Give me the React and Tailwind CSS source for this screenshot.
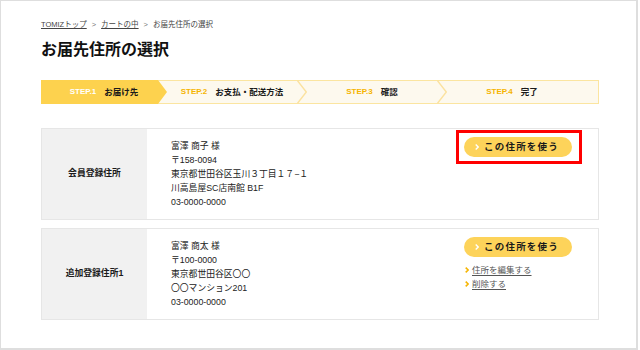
import React from "react";

const FONT = "font-['Liberation_Sans','Noto_Sans_CJK_JP',sans-serif]";

function Chevron({ color = "#ffffff", w = 4, h = 6, sw = 1.4 }) {
  return (
    <svg width={w} height={h} viewBox="0 0 4 6" className="shrink-0">
      <polyline points="0.7,0.6 3.2,3 0.7,5.4" fill="none" stroke={color} strokeWidth={sw} />
    </svg>
  );
}

function StepLabel({ n, label, active }) {
  return (
    <div className="flex items-center justify-center gap-[8px] leading-none">
      <span className={`text-[8px] font-bold ${active ? "text-white" : "text-[#f5b400]"}`}>STEP.{n}</span>
      <span className="text-[8.5px] font-bold text-[#1a1a1a]">{label}</span>
    </div>
  );
}

function StepBar() {
  return (
    <div className="flex h-[24px] w-[558px] items-stretch border border-[#fbe5a0] bg-[#fdf9ee]">
      <div className="-my-px -ml-px flex w-[117px] items-center justify-center bg-[#fdd24e] pl-[9px]">
        <StepLabel n={1} label="お届け先" active />
      </div>
      <svg width="9" height="24" viewBox="0 0 9 24" className="-my-px shrink-0">
        <polygon points="0,0 9,12 0,24" fill="#fdd24e" />
      </svg>
      <div className="flex w-[130px] items-center justify-center">
        <StepLabel n={2} label="お支払・配送方法" />
      </div>
      <svg width="10" height="24" viewBox="0 0 10 24" className="-my-px shrink-0">
        <polyline points="0,0 9.3,12 0,24" fill="none" stroke="#fbe2a0" strokeWidth="1.4" />
      </svg>
      <div className="flex w-[130px] items-center justify-center">
        <StepLabel n={3} label="確認" />
      </div>
      <svg width="10" height="24" viewBox="0 0 10 24" className="-my-px shrink-0">
        <polyline points="0,0 9.3,12 0,24" fill="none" stroke="#fbe2a0" strokeWidth="1.4" />
      </svg>
      <div className="flex w-[130px] items-center justify-center">
        <StepLabel n={4} label="完了" />
      </div>
      <div className="flex-1" />
    </div>
  );
}

function UseButton({ highlight }) {
  return (
    <div className="relative w-fit">
      <button className="flex h-[20px] w-[108px] items-center justify-center gap-[5px] rounded-full bg-[#fdd35a] pr-[2px]">
        <Chevron color="#ffffff" />
        <span className="text-[9.5px] font-bold leading-none tracking-[1.2px] text-[#1a1a1a]">この住所を使う</span>
      </button>
      {highlight && (
        <div className="pointer-events-none absolute -bottom-[7px] -left-[8px] -right-[10px] -top-[7px] border-[3px] border-[#ff0000]" />
      )}
    </div>
  );
}

function AddressCard({ label, lines, highlight, links }) {
  return (
    <div className="flex h-[92px] w-[558px] border border-[#e6e6e6] bg-white">
      <div className="flex w-[105px] shrink-0 items-center justify-center bg-[#f1f1f1]">
        <span className="text-[8.8px] font-bold text-[#1a1a1a]">{label}</span>
      </div>
      <div className="flex flex-1 flex-col justify-center pl-[24px] text-[8.8px] leading-[14px] text-[#222]">
        {lines.map((l, i) => (
          <div key={i}>{l}</div>
        ))}
      </div>
      <div className="flex w-[134px] shrink-0 flex-col pt-[8px]">
        <UseButton highlight={highlight} />
        {links && (
          <div className="mt-[6px] flex flex-col">
            {links.map((t, i) => (
              <a key={i} className="flex h-[14px] items-center gap-[3px] pl-px">
                <Chevron color="#f5b400" w={4} h={6} sw={1.6} />
                <span className="text-[8.5px] leading-none text-[#555] underline underline-offset-[1.5px]">{t}</span>
              </a>
            ))}
          </div>
        )}
      </div>
    </div>
  );
}

export default function App() {
  return (
    <div className={`${FONT} h-[350px] w-[638px] border-b-2 border-l border-r-2 border-t border-[#dedede] bg-white`}>
      <div className="pl-[40px]">
        <div className="mt-[18px] flex h-[12px] items-center text-[7.5px] leading-none text-[#444]">
          <a className="underline underline-offset-[1px]">TOMIZトップ</a>
          <span className="mx-[5px] text-[#777]">&gt;</span>
          <a className="underline underline-offset-[1px]">カートの中</a>
          <span className="mx-[5px] text-[#777]">&gt;</span>
          <span>お届先住所の選択</span>
        </div>
        <h1 className="mt-[7px] h-[24px] text-[16px] font-bold leading-[24px] text-[#111]">お届先住所の選択</h1>
        <div className="mt-[18px]">
          <StepBar />
        </div>
        <div className="mt-[24px] flex flex-col gap-[8px]">
          <AddressCard
            label="会員登録住所"
            highlight
            lines={["富澤 商子 様", "〒158-0094", "東京都世田谷区玉川３丁目１７−１", "川高島屋SC店南館 B1F", "03-0000-0000"]}
          />
          <AddressCard
            label="追加登録住所1"
            links={["住所を編集する", "削除する"]}
            lines={["富澤 商太 様", "〒100-0000", "東京都世田谷区〇〇", "〇〇マンション201", "03-0000-0000"]}
          />
        </div>
      </div>
    </div>
  );
}
